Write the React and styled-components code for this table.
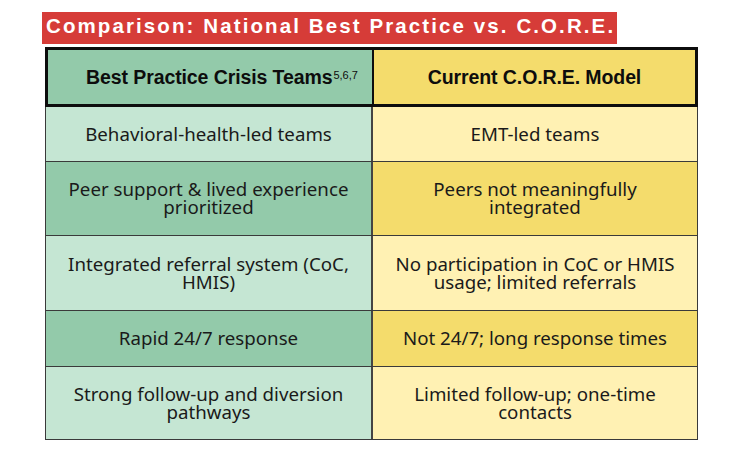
import React from "react";
import styled, { createGlobalStyle } from "styled-components";

const GlobalStyle = createGlobalStyle`
  body {
    margin: 0;
    background: #fff;
  }
`;

const Page = styled.div`
  width: 748px;
  height: 464px;
  box-sizing: border-box;
  padding: 12px 0 0 42px;
`;

const Banner = styled.div`
  display: inline-block;
  height: 32px;
  box-sizing: border-box;
  padding: 0 2px 0 4px;
  background: #d63c38;
  color: #fff;
  font-family: "Liberation Sans", Arial, sans-serif;
  font-weight: 700;
  font-size: 20.5px;
  line-height: 28px;
  letter-spacing: 2.1px;
  white-space: nowrap;
`;

const Table = styled.div`
  width: 653px;
  margin: 3px 0 0 3px;
  display: flex;
  flex-direction: column;
`;

const HeadRow = styled.div`
  display: grid;
  grid-template-columns: 326px 1fr;
  height: 60px;
  box-sizing: border-box;
  border: 3px solid #0d0d0d;
`;

const HeadCell = styled.div`
  display: flex;
  align-items: center;
  justify-content: center;
  padding-left: ${(p) => p.$shift || 0}px;
  background: ${(p) => p.$bg};
  border-right: ${(p) => (p.$divider ? "2px solid #0d0d0d" : "none")};
  font-family: "Liberation Sans", Arial, sans-serif;
  font-weight: 700;
  font-size: 19.5px;
  letter-spacing: -0.1px;
  color: #0d0d0d;
  white-space: nowrap;
  sup {
    font-size: 11px;
    font-weight: 400;
    letter-spacing: 0;
    position: relative;
    top: -2px;
    margin-left: 1px;
  }
`;

const BodyRow = styled.div`
  display: grid;
  grid-template-columns: 327px 1fr;
  height: ${(p) => p.$h}px;
  box-sizing: border-box;
  border-left: 1.5px solid #3a3a3a;
  border-right: 1.5px solid #3a3a3a;
  border-bottom: 1.5px solid #3a3a3a;
`;

const Cell = styled.div`
  display: flex;
  flex-direction: column;
  align-items: center;
  justify-content: center;
  background: ${(p) => p.$bg};
  border-right: ${(p) => (p.$divider ? "2px solid #444" : "none")};
  font-family: "Noto Sans", "Open Sans", sans-serif;
  font-size: 18.7px;
  line-height: 18px;
  color: #1a1a1a;
  text-align: center;
  padding-bottom: 1px;
`;

const Line = styled.span`
  white-space: nowrap;
`;

const palette = {
  light: { left: "#c5e6d3", right: "#fff1b3" },
  dark: { left: "#93caaa", right: "#f4dc6c" },
};

const rows = [
  { h: 55, tone: "light", left: ["Behavioral-health-led teams"], right: ["EMT-led teams"] },
  {
    h: 74,
    tone: "dark",
    left: ["Peer support & lived experience", "prioritized"],
    right: ["Peers not meaningfully", "integrated"],
  },
  {
    h: 75,
    tone: "light",
    left: ["Integrated referral system (CoC,", "HMIS)"],
    right: ["No participation in CoC or HMIS", "usage; limited referrals"],
  },
  { h: 56, tone: "dark", left: ["Rapid 24/7 response"], right: ["Not 24/7; long response times"] },
  {
    h: 73,
    tone: "light",
    left: ["Strong follow-up and diversion", "pathways"],
    right: ["Limited follow-up; one-time", "contacts"],
  },
];

const Lines = ({ items }) => items.map((t) => <Line key={t}>{t}</Line>);

export default function App() {
  return (
    <Page>
      <GlobalStyle />
      <Banner>Comparison: National Best Practice vs. C.O.R.E.</Banner>
      <Table>
        <HeadRow>
          <HeadCell $bg="#93caaa" $divider $shift={24}>
            Best Practice Crisis Teams<sup>5,6,7</sup>
          </HeadCell>
          <HeadCell $bg="#f4dc6c">Current C.O.R.E. Model</HeadCell>
        </HeadRow>
        {rows.map((r, i) => (
          <BodyRow key={i} $h={r.h}>
            <Cell $bg={palette[r.tone].left} $divider>
              <Lines items={r.left} />
            </Cell>
            <Cell $bg={palette[r.tone].right}>
              <Lines items={r.right} />
            </Cell>
          </BodyRow>
        ))}
      </Table>
    </Page>
  );
}
